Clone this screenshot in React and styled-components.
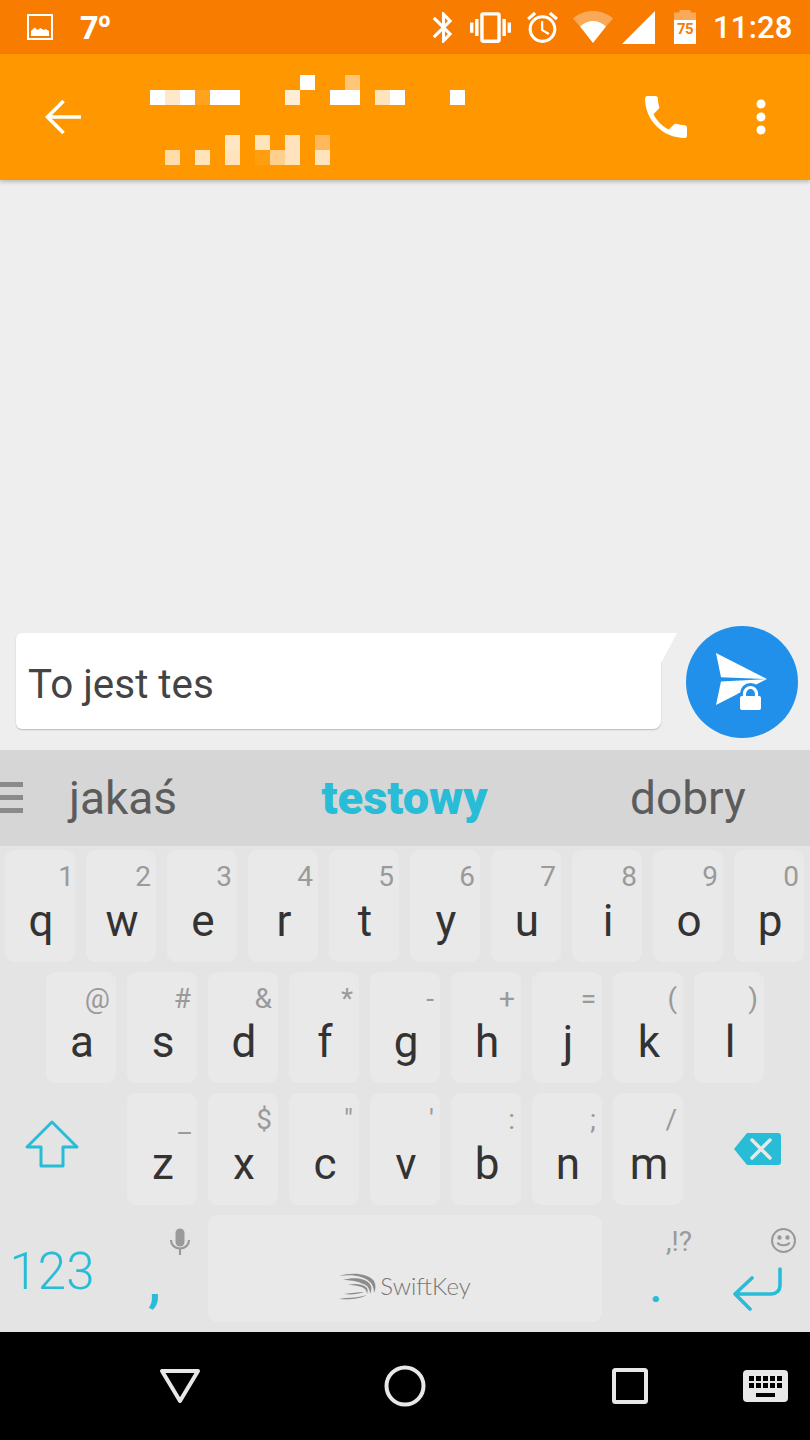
import React from "react";
import styled, { createGlobalStyle } from "styled-components";

const ACCENT = "#29bcd6";

const Global = createGlobalStyle`
  html, body { margin: 0; padding: 0; background: #eee; }
  * { box-sizing: border-box; }
`;

const Screen = styled.div`
  width: 810px;
  height: 1440px;
  display: flex;
  flex-direction: column;
  overflow: hidden;
  font-family: Roboto, "Liberation Sans", sans-serif;
  background: #eeeeee;
`;

const StatusBar = styled.header`
  height: 54px;
  flex: none;
  display: flex;
  align-items: center;
  background: #f87c00;
  color: #fff;
  padding-left: 26px;
`;

const Temperature = styled.span`
  margin-left: 26px;
  font-size: 32px;
  font-weight: 700;
  line-height: 54px;
  font-family: "Noto Sans", Roboto, sans-serif;
`;

const StatusIcons = styled.div`
  margin-left: auto;
  display: flex;
  align-items: center;
`;

const StatusIcon = styled.svg`
  flex: none;
  display: block;
  width: ${(p) => p.$w}px;
  height: ${(p) => p.$h}px;
  margin-left: ${(p) => p.$gap || 0}px;
  fill: #fff;
`;

const Battery = styled.div`
  position: relative;
  width: 22px;
  height: 34px;
  margin-left: 19px;
  flex: none;
`;

const BatteryLevel = styled.span`
  position: absolute;
  left: 0;
  right: 0;
  bottom: 0;
  height: 24px;
  background: #fff;
  color: #f87c00;
  font-size: 15px;
  font-weight: 700;
  line-height: 18px;
  letter-spacing: -0.5px;
  text-align: center;
`;

const BatteryCap = styled.span`
  position: absolute;
  left: 0;
  right: 0;
  top: 0;
  height: 10px;
  background: rgba(255, 255, 255, 0.35);
  clip-path: polygon(0 25%, 25% 25%, 25% 0, 75% 0, 75% 25%, 100% 25%, 100% 100%, 0 100%);
`;

const Clock = styled.span`
  margin-left: 17px;
  width: 97px;
  font-size: 31px;
  font-weight: 500;
  letter-spacing: 0.2px;
  line-height: 54px;
  padding-top: 2px;
`;

const AppBar = styled.div`
  height: 126px;
  flex: none;
  display: flex;
  align-items: center;
  padding-left: 45px;
  background: #ff9800;
  box-shadow: 0 2px 4px rgba(0, 0, 0, 0.22);
  position: relative;
  z-index: 1;
`;

const BarIcon = styled.svg`
  flex: none;
  display: block;
  width: ${(p) => p.$w}px;
  height: ${(p) => p.$h}px;
  margin-left: ${(p) => p.$gap || 0}px;
`;

const Mosaic = styled.svg`
  flex: none;
  display: block;
  width: 315px;
  height: 90px;
  margin-left: 69px;
  margin-top: 6px;
`;

const Actions = styled.div`
  margin-left: auto;
  margin-right: 44px;
  display: flex;
  align-items: center;
`;

const Thread = styled.main`
  flex: 1;
`;

const Composer = styled.div`
  flex: none;
  display: flex;
  align-items: flex-start;
  gap: 25px;
  padding: 0 12px 12px 16px;
  height: 124px;
`;

const Bubble = styled.div`
  position: relative;
  flex: 1;
  height: 96px;
  margin-top: 7px;
  background: #fff;
  border-radius: 6px 0 8px 6px;
  box-shadow: 0 1px 1.5px rgba(0, 0, 0, 0.22);
  font-size: 40.4px;
  line-height: 104px;
  padding-left: 12px;
  color: #444;
  &::after {
    content: "";
    position: absolute;
    top: 0;
    left: 100%;
    width: 16px;
    height: 30px;
    background: #fff;
    clip-path: polygon(0 0, 100% 0, 0 100%);
  }
`;

const SendButton = styled.button`
  flex: none;
  width: 112px;
  height: 112px;
  padding: 0;
  border: 0;
  border-radius: 50%;
  background: #2090ea;
  display: flex;
  align-items: center;
  justify-content: center;
`;

const Suggestions = styled.div`
  flex: none;
  height: 96px;
  display: grid;
  grid-template-columns: 23px 200px 363px 204px;
  align-items: center;
  background: #d6d6d6;
`;

const Suggestion = styled.span`
  text-align: center;
  font-size: ${(p) => (p.$active ? 47 : 46)}px;
  font-weight: ${(p) => (p.$active ? 900 : 400)};
  color: ${(p) => (p.$active ? ACCENT : "#5c5c5c")};
  line-height: 96px;
`;

const Keyboard = styled.section`
  flex: none;
  height: 486px;
  padding: 4px 0 10px;
  display: flex;
  flex-direction: column;
  gap: 10px;
  background: #e4e4e4;
`;

const Row = styled.div`
  height: ${(p) => p.$h}px;
  flex: none;
  display: flex;
  gap: 11px;
  padding-left: ${(p) => p.$pad || 0}px;
`;

const Key = styled.div`
  position: relative;
  flex: none;
  width: 70px;
  border-radius: 9px;
  background: #e9e9e9;
  display: flex;
  align-items: flex-end;
  justify-content: center;
  padding: 0 0 19px 2px;
  font-size: 44px;
  line-height: 44px;
  color: #333;
`;

const Hint = styled.span`
  position: absolute;
  right: ${(p) => p.$right ?? 6}px;
  top: ${(p) => p.$top ?? 10}px;
  font-size: ${(p) => p.$size || 28}px;
  line-height: 34px;
  font-weight: 400;
  color: #9a9a9a;
`;

const Slot = styled.div`
  position: relative;
  flex: none;
  width: ${(p) => p.$w}px;
  display: flex;
  align-items: center;
  justify-content: center;
  padding: ${(p) => p.$padding || 0};
`;

const SpaceKey = styled.div`
  flex: none;
  width: 394px;
  border-radius: 9px;
  background: #e9e9e9;
  display: flex;
  align-items: flex-end;
  justify-content: center;
  gap: 3px;
  padding: 0 0 21px 0;
`;

const Brand = styled.span`
  font-family: Lato, "Open Sans", sans-serif;
  font-size: 24px;
  font-weight: 300;
  line-height: 30px;
  color: #777;
`;

const NumberKey = styled.span`
  font-size: 51px;
  line-height: 52px;
  font-weight: 300;
  color: ${ACCENT};
  margin-top: 7px;
`;

const Punct = styled.span`
  position: absolute;
  left: ${(p) => p.$left}px;
  top: ${(p) => p.$top}px;
  font-size: ${(p) => p.$size}px;
  line-height: 1;
  font-weight: ${(p) => p.$weight || 400};
  color: ${ACCENT};
`;

const KeyIcon = styled.svg`
  position: absolute;
  display: block;
  left: ${(p) => p.$left}px;
  top: ${(p) => p.$top}px;
`;

const NavBar = styled.nav`
  flex: none;
  height: 108px;
  display: grid;
  grid-template-columns: 225px 225px 226px 45px;
  justify-items: center;
  align-items: center;
  padding-left: 67px;
  background: #000;
`;

const rows = [
  [["q","1"],["w","2"],["e","3"],["r","4"],["t","5"],["y","6"],["u","7"],["i","8"],["o","9"],["p","0"]],
  [["a","@"],["s","#"],["d","&"],["f","*"],["g","-"],["h","+"],["j","="],["k","("],["l",")"]],
  [["z","_"],["x","$"],["c","\""],["v","'"],["b",":"],["n",";"],["m","/"]],
];

const blocks = [
  [0,15,15,"#fff"],[15,15,15,"#ffe8c9"],[30,15,15,"#fff"],[45,15,15,"#ffa21e"],[60,15,30,"#fff"],
  [135,15,15,"#ffeed6"],[150,0,15,"#fff"],[180,15,30,"#fff"],[195,0,15,"#ffc67a"],
  [225,15,15,"#ffe3bd"],[240,15,15,"#fff"],[300,15,15,"#fff"],
  [15,75,15,"#ffdca8"],[45,75,15,"#ffe3bd"],[75,60,15,"#ffe6c4"],[75,75,15,"#ffe3bd"],
  [105,60,15,"#ffe3bd"],[105,75,15,"#ff9f10"],[120,75,15,"#ffcf8c"],[135,60,15,"#ffe3bd"],[135,75,15,"#ffe3bd"],
  [165,60,15,"#ffb95c"],[165,75,15,"#ffe3bd"],
];

export default function App() {
  return (
    <Screen>
      <Global />
      <StatusBar>
        <StatusIcon $w={28} $h={28} viewBox="0 0 28 28">
          <path fillRule="evenodd" d="M1 1h26v26H1zM3 3v22h22V3z" />
          <path d="M5 23v-5l3.500-3.500 3 2.500 3-2 3 2 2-1 3.500 2v5z" />
        </StatusIcon>
        <Temperature>7º</Temperature>
        <StatusIcons>
          <StatusIcon $w={37} $h={37} viewBox="0 0 24 24">
            <path d="M17.710 7.710L12 2h-1v7.590L6.410 5 5 6.410 10.590 12 5 17.590 6.410 19 11 14.410V22h1l5.710-5.710-4.300-4.290 4.300-4.290zM13 5.830l1.880 1.880L13 9.590V5.830zm1.880 10.460L13 18.170v-3.760l1.880 1.880z" />
          </StatusIcon>
          <StatusIcon $w={41} $h={41} $gap={8} viewBox="0 0 24 24">
            <path d="M0 15h2V9H0v6zm3 2h2V7H3v10zm19-8v6h2V9h-2zm-3 8h2V7h-2v10zM16.500 3h-9C6.670 3 6 3.670 6 4.500v15c0 .83.67 1.500 1.500 1.500h9c.83 0 1.500-.67 1.500-1.500v-15c0-.83-.67-1.500-1.500-1.500zM16 19H8V5h8v14z" />
          </StatusIcon>
          <StatusIcon $w={37} $h={37} $gap={13} viewBox="0 0 24 24">
            <path d="M22 5.720l-4.600-3.860-1.290 1.530 4.600 3.860L22 5.720zM7.880 3.390L6.600 1.860 2 5.710l1.290 1.530 4.590-3.850zM12.500 8H11v6l4.750 2.850.75-1.230-4-2.370V8zM12 4c-4.970 0-9 4.030-9 9s4.020 9 9 9c4.970 0 9-4.030 9-9s-4.030-9-9-9zm0 16c-3.870 0-7-3.130-7-7s3.130-7 7-7 7 3.130 7 7-3.130 7-7 7z" />
          </StatusIcon>
          <StatusIcon $w={40} $h={34} $gap={12} viewBox="0 0 40 34">
            <path d="M0 8.500C5.500 3.500 12.500 1 20 1s14.500 2.500 20 7.500l-7 8C29.500 13 25 11 20 11S10.500 13 7 16.500z" opacity="0.35" />
            <path d="M7 16.500C10.500 13 15 11 20 11s9.500 2 13 5.500L20 33z" />
          </StatusIcon>
          <StatusIcon $w={33} $h={33} $gap={9} viewBox="0 0 33 33">
            <path d="M33 0v33H0z" />
          </StatusIcon>
          <Battery>
            <BatteryCap />
            <BatteryLevel>75</BatteryLevel>
          </Battery>
          <Clock>11:28</Clock>
        </StatusIcons>
      </StatusBar>

      <AppBar>
        <BarIcon $w={36} $h={36} viewBox="0 0 36 36" fill="none" stroke="#fff" strokeWidth="3.600">
          <path d="M36 18H3M18.500 2L2.500 18l16 16" />
        </BarIcon>
        <Mosaic viewBox="0 0 315 90">
          {blocks.map(([x, y, w, c], i) => (
            <rect key={i} x={x} y={y} width={w} height="15" fill={c} />
          ))}
        </Mosaic>
        <Actions>
          <BarIcon $w={56} $h={56} viewBox="0 0 24 24" fill="#fff">
            <path d="M6.620 10.790c1.440 2.830 3.760 5.140 6.590 6.590l2.200-2.200c.27-.27.67-.36 1.020-.24 1.120.37 2.330.57 3.570.57.55 0 1 .45 1 1V20c0 .55-.45 1-1 1-9.390 0-17-7.610-17-17 0-.55.45-1 1-1h3.500c.55 0 1 .45 1 1 0 1.250.2 2.450.57 3.570.11.35.03.74-.25 1.020l-2.200 2.200z" />
          </BarIcon>
          <BarIcon $w={10} $h={36} $gap={62} viewBox="0 0 10 36" fill="#fff">
            <circle cx="5" cy="5" r="4.500" />
            <circle cx="5" cy="18" r="4.500" />
            <circle cx="5" cy="31" r="4.500" />
          </BarIcon>
        </Actions>
      </AppBar>

      <Thread />

      <Composer>
        <Bubble>To jest tes</Bubble>
        <SendButton aria-label="send">
          <svg width="112" height="112" viewBox="0 0 112 112">
            <path d="M30 27l51 26-46-1.700z" fill="#fff" />
            <path d="M35 55.500L81 53 30 79z" fill="#fff" />
            <path d="M58.500 71v-3.500a6 6 0 0 1 12 0V71" fill="none" stroke="#2090ea" strokeWidth="9" />
            <rect x="51" y="67" width="27" height="20" rx="3" fill="#2090ea" />
            <path d="M58.500 71v-3.500a6 6 0 0 1 12 0V71" fill="none" stroke="#fff" strokeWidth="3.200" />
            <rect x="54" y="70" width="21" height="14" rx="2" fill="#fff" />
          </svg>
        </SendButton>
      </Composer>

      <Suggestions>
        <svg width="23" height="32" viewBox="0 0 23 32" fill="#8a8a8a">
          <rect y="0" width="23" height="5" />
          <rect y="13" width="23" height="5" />
          <rect y="26" width="23" height="5" />
        </svg>
        <Suggestion>jakaś</Suggestion>
        <Suggestion $active>testowy</Suggestion>
        <Suggestion>dobry</Suggestion>
      </Suggestions>

      <Keyboard>
        <Row $h={112} $pad={5}>
          {rows[0].map(([k, h]) => (
            <Key key={k}>
              {k}
              <Hint $right={k === "q" ? 1 : 5} $top={10}>{h}</Hint>
            </Key>
          ))}
        </Row>
        <Row $h={111} $pad={46}>
          {rows[1].map(([k, h]) => (
            <Key key={k}>
              {k}
              <Hint $right={6} $top={10}>{h}</Hint>
            </Key>
          ))}
        </Row>
        <Row $h={112}>
          <Slot $w={116} $padding="0 12px 10px 0">
            <svg width="54" height="48" viewBox="0 0 54 48" fill="none" stroke={ACCENT} strokeWidth="3">
              <path d="M27 2L2 27h14v19h22V27h14z" strokeLinejoin="round" />
            </svg>
          </Slot>
          {rows[2].map(([k, h]) => (
            <Key key={k}>
              {k}
              <Hint $right={6} $top={k === "z" ? 13 : 10}>{h}</Hint>
            </Key>
          ))}
          <Slot $w={116} $padding="0 0 0 10px">
            <svg width="48" height="32" viewBox="0 0 48 32">
              <path d="M14 0h31a3 3 0 0 1 3 3v26a3 3 0 0 1-3 3H14L1 16z" fill={ACCENT} />
              <path d="M19 7l18 18M37 7L19 25" stroke="#e8e8e8" strokeWidth="3.500" strokeLinecap="round" />
            </svg>
          </Slot>
        </Row>
        <Row $h={107}>
          <Slot $w={116} $padding="0 12px 0 0">
            <NumberKey>123</NumberKey>
          </Slot>
          <Slot $w={70}>
            <Punct $left={21} $top={37} $size={58} $weight={500}>,</Punct>
            <KeyIcon $left={42} $top={13} width="22" height="28" viewBox="0 0 22 28">
              <rect x="6.500" y="0.500" width="9" height="18" rx="4.500" fill="#9a9a9a" />
              <path d="M2 12c0 5 4 8.500 9 8.500s9-3.500 9-8.500M11 20v7" fill="none" stroke="#9a9a9a" strokeWidth="2.200" />
            </KeyIcon>
          </Slot>
          <SpaceKey>
            <svg width="38" height="28" viewBox="0 0 38 28" fill="#8c8c8c">
              <path d="M0 3C12-1 29 0 35 8c2 4 2 8 0 12 0-4-1-7-3-10C26 3 13 1 0 3z" />
              <path d="M4 7c10-3 21-2 26 3 3 3 3 7 1 11 0-3-1-6-3-8C22 9 13 7 4 7z" />
              <path d="M9 12c7-2 14-1 18 2 2 2 2 4 1 7 0-2-1-3-2-5-4-3-10-4-17-4z" />
              <path d="M0 26c10 1 21 0 28-4-6 2-14 3-22 3z" />
              <path d="M5 21c7 1 15 0 20-2-6 0-13 1-20 2z" />
            </svg>
            <Brand>SwiftKey</Brand>
          </SpaceKey>
          <Slot $w={70}>
            <Punct $left={37} $top={54} $size={40} $weight={700}>.</Punct>
            <Hint $right={-9} $top={10} $size={28}>,!?</Hint>
          </Slot>
          <Slot $w={116}>
            <KeyIcon $left={76} $top={12} width="27" height="27" viewBox="0 0 27 27" fill="none" stroke="#999" strokeWidth="2">
              <circle cx="13.500" cy="13.500" r="11.500" />
              <circle cx="9.500" cy="10.500" r="1.200" fill="#999" />
              <circle cx="17.500" cy="10.500" r="1.200" fill="#999" />
              <path d="M7.500 15.500c1.500 3.500 10.500 3.500 12 0" />
            </KeyIcon>
            <KeyIcon $left={38} $top={52} width="52" height="45" viewBox="0 0 52 45" fill="none" stroke={ACCENT} strokeWidth="3.600" strokeLinecap="round" strokeLinejoin="round">
              <path d="M48 2v16c0 6-4 9-9 9H3M3 27l17-16M3 27l15 15" />
            </KeyIcon>
          </Slot>
        </Row>
      </Keyboard>

      <NavBar>
        <svg width="42" height="36" viewBox="0 0 42 36" fill="none" stroke="#e8e8e8" strokeWidth="4" strokeLinejoin="round">
          <path d="M3 3h36L21 33z" />
        </svg>
        <svg width="42" height="42" viewBox="0 0 42 42" fill="none" stroke="#e8e8e8" strokeWidth="4">
          <circle cx="21" cy="21" r="18.500" />
        </svg>
        <svg width="38" height="38" viewBox="0 0 38 38" fill="none" stroke="#e8e8e8" strokeWidth="4">
          <rect x="3" y="3" width="32" height="32" rx="1.500" />
        </svg>
        <svg width="45" height="32" viewBox="0 0 45 32">
          <rect width="45" height="32" rx="4" fill="#e8e8e8" />
          {[0, 1].map((r) =>
            [0, 1, 2, 3, 4].map((c) => (
              <rect key={`${r}${c}`} x={6 + c * 7} y={6 + r * 7} width="5" height="5" fill="#000" />
            ))
          )}
          <rect x="13" y="23" width="19" height="4" fill="#000" />
        </svg>
      </NavBar>
    </Screen>
  );
}
